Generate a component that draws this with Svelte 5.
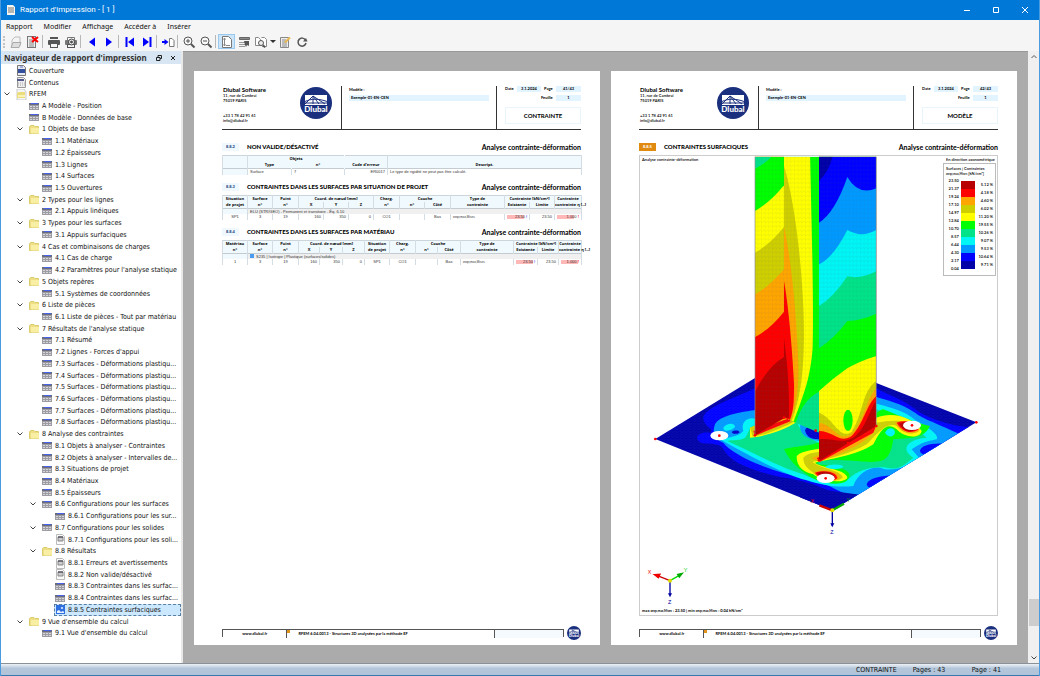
<script>
    const menus = ["Rapport", "Modifier", "Affichage", "Accéder à", "Insérer"];

    // "|" is a separator
    const tools = ["new", "delete", "|", "print", "printset", "|", "prev", "next", "|", "first", "last", "|",
        "goto", "|", "zoomin", "zoomout", "|", "fit", "header", "find", "caret", "edit", "refresh"];
    const toolNames = {
        new: "Nouveau", delete: "Supprimer", print: "Imprimer", printset: "Options d'impression", prev: "Précédent",
        next: "Suivant", first: "Première page", last: "Dernière page", goto: "Aller à", zoomin: "Zoom avant",
        zoomout: "Zoom arrière", fit: "Ajuster", header: "En-tête", find: "Rechercher", caret: "Plus",
        edit: "Éditer", refresh: "Actualiser",
    };

    // depth, icon, label, expandable
    const tree = [
        [0, "cover", "Couverture"],
        [0, "toc", "Contenus"],
        [0, "root", "RFEM", true],
        [1, "table", "A Modèle - Position"],
        [1, "table", "B Modèle - Données de base"],
        [1, "folder", "1 Objets de base", true],
        [2, "table", "1.1 Matériaux"],
        [2, "table", "1.2 Épaisseurs"],
        [2, "table", "1.3 Lignes"],
        [2, "table", "1.4 Surfaces"],
        [2, "table", "1.5 Ouvertures"],
        [1, "folder", "2 Types pour les lignes", true],
        [2, "table", "2.1 Appuis linéiques"],
        [1, "folder", "3 Types pour les surfaces", true],
        [2, "table", "3.1 Appuis surfaciques"],
        [1, "folder", "4 Cas et combinaisons de charges", true],
        [2, "table", "4.1 Cas de charge"],
        [2, "table", "4.2 Paramètres pour l'analyse statique"],
        [1, "folder", "5 Objets repères", true],
        [2, "table", "5.1 Systèmes de coordonnées"],
        [1, "folder", "6 Liste de pièces", true],
        [2, "table", "6.1 Liste de pièces - Tout par matériau"],
        [1, "folder", "7 Résultats de l'analyse statique", true],
        [2, "table", "7.1 Résumé"],
        [2, "table", "7.2 Lignes - Forces d'appui"],
        [2, "table", "7.3 Surfaces - Déformations plastiqu..."],
        [2, "table", "7.4 Surfaces - Déformations plastiqu..."],
        [2, "table", "7.5 Surfaces - Déformations plastiqu..."],
        [2, "table", "7.6 Surfaces - Déformations plastiqu..."],
        [2, "table", "7.7 Surfaces - Déformations plastiqu..."],
        [2, "table", "7.8 Surfaces - Déformations plastiqu..."],
        [1, "folder", "8 Analyse des contraintes", true],
        [2, "table", "8.1 Objets à analyser - Contraintes"],
        [2, "table", "8.2 Objets à analyser - Intervalles de..."],
        [2, "table", "8.3 Situations de projet"],
        [2, "table", "8.4 Matériaux"],
        [2, "table", "8.5 Épaisseurs"],
        [2, "table", "8.6 Configurations pour les surfaces", true],
        [3, "table", "8.6.1 Configurations pour les sur..."],
        [2, "table", "8.7 Configurations pour les solides", true],
        [3, "note", "8.7.1 Configurations pour les soli..."],
        [2, "folder", "8.8 Résultats", true],
        [3, "note", "8.8.1 Erreurs et avertissements"],
        [3, "note", "8.8.2 Non valide/désactivé"],
        [3, "table", "8.8.3 Contraintes dans les surfac..."],
        [3, "table", "8.8.4 Contraintes dans les surfac..."],
        [3, "image", "8.8.5 Contraintes surfaciques"],
        [1, "folder", "9 Vue d'ensemble du calcul", true],
        [2, "table", "9.1 Vue d'ensemble du calcul"],
    ];
    let selected = $state("8.8.5 Contraintes surfaciques");

    const cols1 = [25, 44, 53, 43, 194];
    const cols2 = [25, 25, 26, 25, 25, 25, 26, 25, 26, 54, 25, 25, 27];
    const cols3 = [25, 25, 26, 21, 23, 22, 25, 26, 22, 23, 53, 24, 21, 23];

    const levels = ["23.50", "21.37", "19.24", "17.10", "14.97", "12.84", "10.70", "8.57", "6.44", "4.30", "2.17", "0.04"];
    const bands = [
        ["#b80000", "5.12 %"], ["#ff0000", "4.18 %"], ["#ffa500", "4.60 %"], ["#cfcf00", "6.02 %"],
        ["#ffff00", "11.20 %"], ["#00ff00", "19.55 %"], ["#00e388", "10.26 %"], ["#00f5f5", "9.07 %"],
        ["#0099ff", "9.53 %"], ["#0000ff", "10.64 %"], ["#0000a8", "9.71 %"],
    ];
</script>

{#snippet toolIcon(name)}
    <svg viewBox="0 0 14 14" width="14" height="14" fill="none" stroke="#555" aria-hidden="true">
        {#if name == "new"}
            <path d="M3 12V5l3-3h5v9" fill="#f4f4f4" stroke="#bbb" />
            <path d="M2 12.5l2-5h8l-2 5z" fill="#ddd" stroke="#aaa" />
        {:else if name == "delete"}
            <rect x="1.5" y="1.5" width="8" height="11" fill="#eee" stroke="#777" />
            <path d="M3 5h4M3 7h5M3 9h5M3 11h5" stroke="#888" />
            <path d="M6 2l6 5M12 2L6 7" stroke="#f00" stroke-width="2" />
        {:else if name == "print"}
            <rect x="3" y="2" width="8" height="2" fill="#555" stroke="none" />
            <rect x="1" y="5" width="12" height="5" rx="1" fill="#555" stroke="none" />
            <rect x="3.5" y="8.5" width="7" height="4" fill="#f4f4f4" />
        {:else if name == "printset"}
            <path d="M3.5 5V2.500h7V5" fill="#fff" stroke="#777" />
            <rect x="1" y="5" width="12" height="5" rx="1" fill="#777" stroke="none" />
            <rect x="3.5" y="9.5" width="7" height="3" fill="#f4f4f4" />
            <circle cx="7.5" cy="7" r="3" fill="#eee" stroke="#444" />
            <circle cx="7.5" cy="7" r="1" fill="#444" />
        {:else if name == "prev"}
            <path d="M10 2.5v9L4 7z" fill="#00f" stroke="none" />
        {:else if name == "next"}
            <path d="M4 2.5v9L10 7z" fill="#00f" stroke="none" />
        {:else if name == "first"}
            <path d="M11 2.5v9L5 7z" fill="#00f" stroke="none" />
            <path d="M3.5 2v10" stroke="#00f" stroke-width="2" />
        {:else if name == "last"}
            <path d="M3 2.5v9L9 7z" fill="#00f" stroke="none" />
            <path d="M10.5 2v10" stroke="#00f" stroke-width="2" />
        {:else if name == "goto"}
            <path d="M1 7h3" stroke="#00f" stroke-width="2" />
            <path d="M3.500 4v6L7.5 7z" fill="#00f" stroke="none" />
            <path d="M8.5 3.5H11l2 2v6H8.500z" fill="#fff" stroke="#777" />
        {:else if name == "zoomin" || name == "zoomout"}
            <circle cx="6" cy="6" r="4" fill="#f8f8f8" />
            <path d="M4 6h4" />
            {#if name == "zoomin"}<path d="M6 4v4" />{/if}
            <path d="M9 9l3.5 3.5" stroke-width="2" />
        {:else if name == "fit"}
            <path d="M2.5 1.5h6l3 3v8h-9z" fill="#fff" stroke="#777" />
            <path d="M4.5 3v8M3.5 4.5l1-1.5 1 1.5M3.5 9.5l1 1.500 1-1.500M6 10.5h4" stroke="#888" />
        {:else if name == "header"}
            <path d="M2.500 2.5h10v2h-10z" fill="#888" stroke="#666" />
            <path d="M2 7.5h7M2 9.5h6M2 11.5h6" stroke="#999" />
            <path d="M7 6h5v5l-2-1-1 2-1-2z" fill="#555" stroke="none" />
        {:else if name == "find"}
            <path d="M1.5 2.5h3l2 2v6h-5zM7.500 2.5h3l2 2v7H8" fill="#fff" stroke="#888" />
            <circle cx="7" cy="8" r="2.5" fill="#eee" />
            <path d="M9 10l2 2.5" stroke-width="2" />
        {:else if name == "edit"}
            <path d="M2.500 2.500h8v10h-8z" fill="#eee" stroke="#888" />
            <path d="M4 5h4M4 7h5M4 9h5M4 11h5" stroke="#888" />
            <path d="M7 7.500L12 2.500" stroke="#e8b850" stroke-width="2" />
        {:else if name == "refresh"}
            <path d="M10.5 5A4 4 0 1 0 11 8" stroke-width="1.500" />
            <path d="M8 6.5h4.5L11 3z" fill="#555" stroke="none" />
        {/if}
    </svg>
{/snippet}

{#snippet treeIcon(name)}
    <svg viewBox="0 0 11 11" width="11" height="11" aria-hidden="true">
        {#if name == "table"}
            <path d="M0 2h10v7H0z" fill="#9c9ca2" />
            <path d="M0 2h10v2H0z" fill="#6a6c80" />
            <path d="M2 2h7v1H2z" fill="#4a62e8" />
            <path d="M1 5.5h8M1 7.5h8" stroke="#d6d6da" stroke-dasharray="2 1" />
        {:else if name == "folder"}
            <path d="M.5 2.5L2 1.500h3l1 1h3.5v7h-9z" fill="#ecdf86" stroke="#dccb6c" />
            <path d="M2 4h8v5.500H2z" fill="#f8eea4" />
        {:else if name == "root"}
            <path d="M1 0h7l2 3v8H1z" fill="#f5f5f5" stroke="#ccc" />
            <path d="M1 4l2-1h6v6H1z" fill="#ecdd7c" />
            <path d="M2 6h7v2H2z" fill="#fbf3b6" />
        {:else if name == "cover"}
            <path d="M1.5.5h6l2 2v8h-8z" fill="#e6e9f2" stroke="#777" />
            <path d="M2 4h7v4H2z" fill="#33509c" />
            <path d="M4 2h3" stroke="#6680cc" />
        {:else if name == "toc"}
            <path d="M1.5.5h6l2 2v8h-8z" fill="#eee" stroke="#999" />
            <path d="M1 2h7v2H1z" fill="#555a8c" />
            <path d="M2 6h7M2 8h7" stroke="#aaa" stroke-dasharray="1 1" />
        {:else if name == "note"}
            <path d="M1.5.5h6l2 2v8h-8z" fill="#fafafa" stroke="#bbb" />
            <path d="M3 3h5v4H3z" fill="#ccc" stroke="#888" />
            <path d="M3 3h5" stroke="#334" />
        {:else}
            <path d="M1 1h9v9H1z" fill="#2f6fe0" />
            <path d="M2 9V7l2-1 2 2 2-1 1 1v1z" fill="#e8f1ff" />
            <path d="M6 3h2v2H6z" fill="#bcd4ff" />
        {/if}
    </svg>
{/snippet}

{#snippet logo(size)}
    <svg class="logo" viewBox="0 0 32 32" width={size} height={size} role="img" aria-label="Dlubal">
        <circle cx="16" cy="16" r="16" fill="#1a2f7d" />
        <path d="M5 8h22v10H5z" fill="#fff" />
        <path d="M5 17L13 9l12 8M13 9v8M13 9l6 8M5 14.5c6-3 14-3 22 0" stroke="#1a2f7d" fill="none" />
        <path d="M5 16h22" stroke="#1a2f7d" />
        <text x="16" y="25" text-anchor="middle" class="logo-text">Dlubal</text>
    </svg>
{/snippet}

{#snippet pageHeader(title, page)}
    <header class="rep-head">
        <div class="company">
            <address>
                <b>Dlubal Software</b>
                <span>11, rue de Cambrai</span>
                <span>75019 PARIS</span>
                <span class="phone">+33 1 78 42 91 61</span>
                <span>info@dlubal.fr</span>
            </address>
            {@render logo(32)}
        </div>
        <div class="model">
            <span>Modèle :</span>
            <span class="field">Exemple-01-EN-CEN</span>
        </div>
        <div class="meta">
            <div class="meta-grid">
                <span>Date</span><span class="field">3.1.2024</span><span>Page</span><span class="field">{page}</span>
                <span class="sheet">Feuille</span><span class="field">1</span>
            </div>
            <div class="box">{title}</div>
        </div>
    </header>
{/snippet}

{#snippet heading(num, title, hot)}
    <div class="rep-title">
        <span class="num" class:hot>{num}</span>
        <h2>{title}</h2>
        <span class="module">Analyse contrainte-déformation</span>
    </div>
{/snippet}

{#snippet pageFooter()}
    <footer class="rep-foot">
        <div class="foot-box">
            <span class="site">www.dlubal.fr</span>
            <span class="prog"><i></i>RFEM 6.04.0013 - Structures 3D analysées par la méthode EF</span>
            <span class="blank"></span>
        </div>
        {@render logo(14)}
    </footer>
{/snippet}

{#snippet colgroup(widths)}
    <colgroup>
        {#each widths as w}<col style="width: {w}px" />{/each}
    </colgroup>
{/snippet}

<div class="window">
    <div class="titlebar">
        <svg viewBox="0 0 10 12" width="10" height="12" aria-hidden="true">
            <path d="M1 1h6l2 2v8H1z" fill="#f4f4f0" />
            <path d="M2 4h6M2 6h6M2 8h6" stroke="#777" />
        </svg>
        <span class="caption">Rapport d'impression - [ 1 ]</span>
        <button aria-label="Réduire"><svg viewBox="0 0 8 8" width="8" height="8"><path d="M1 4.5h6" stroke="#fff" /></svg></button>
        <button aria-label="Agrandir"><svg viewBox="0 0 8 8" width="8" height="8"><path d="M1.5 1.5h5v5h-5z" fill="none" stroke="#fff" /></svg></button>
        <button aria-label="Fermer"><svg viewBox="0 0 8 8" width="8" height="8"><path d="M1 1l6 6M7 1L1 7" stroke="#fff" /></svg></button>
    </div>

    <nav class="menubar">
        {#each menus as menu}<button>{menu}</button>{/each}
    </nav>

    <div class="toolbar">
        <span class="grip"></span>
        {#each tools as tool}
            {#if tool == "|"}
                <span class="sep"></span>
            {:else if tool == "caret"}
                <button class="caret" aria-label={toolNames[tool]}></button>
            {:else}
                <button class="tool" class:on={tool == "fit"} aria-label={toolNames[tool]}>{@render toolIcon(tool)}</button>
            {/if}
        {/each}
    </div>

    <main>
        <aside>
            <div class="nav-head">
                <b>Navigateur de rapport d'impression</b>
                <button aria-label="Détacher"><svg viewBox="0 0 8 8" width="8" height="8" fill="none" stroke="#222"><path d="M3 3V1.5h3.5v3H5M1.5 3.500H5v3H1.5z" /></svg></button>
                <button aria-label="Fermer le navigateur"><svg viewBox="0 0 8 8" width="8" height="8" stroke="#222"><path d="M2 2l4 4M6 2L2 6" /></svg></button>
            </div>
            <ul>
                {#each tree as [depth, icon, label, open]}
                    <li class="d{depth}">
                        <span class="chev">
                            {#if open}<svg viewBox="0 0 8 6" width="8" height="6"><path d="M1.5 1.5L4 4l2.5-2.5" fill="none" stroke="#444" /></svg>{/if}
                        </span>
                        <button class:selected={label == selected} onclick={() => (selected = label)}>
                            {@render treeIcon(icon)}
                            <span>{label}</span>
                        </button>
                    </li>
                {/each}
            </ul>
        </aside>

        <div class="pages">
            <article>
                {@render pageHeader("CONTRAINTE", "41/43")}

                {@render heading("8.8.2", "NON VALIDE/DÉSACTIVÉ")}
                <table>
                    {@render colgroup(cols1)}
                    <thead>
                        <tr><th></th><th colspan="2" class="joined">Objets</th><th></th><th></th></tr>
                        <tr><th></th><th class="joined">Type</th><th class="joined">n°</th><th>Code d'erreur</th><th>Descript.</th></tr>
                    </thead>
                    <tbody>
                        <tr><td class="tint"></td><td class="l">Surface</td><td class="l">7</td><td class="r">ER0017</td><td class="l">Le type de rigidité ne peut pas être calculé.</td></tr>
                    </tbody>
                </table>

                {@render heading("8.8.3", "CONTRAINTES DANS LES SURFACES PAR SITUATION DE PROJET")}
                <table>
                    {@render colgroup(cols2)}
                    <thead>
                        <tr>
                            <th>Situation</th><th>Surface</th><th>Point</th><th colspan="3">Coord. de nœud [mm]</th><th>Charg.</th>
                            <th colspan="2">Couche</th><th>Type de</th><th colspan="2">Contrainte [kN/cm²]</th><th>Contrainte</th>
                        </tr>
                        <tr>
                            <th>de projet</th><th>n°</th><th>n°</th><th>X</th><th>Y</th><th>Z</th><th>n°</th>
                            <th>n°</th><th>Côté</th><th>contrainte</th><th>Existante</th><th>Limite</th><th>contrainte η [--]</th>
                        </tr>
                    </thead>
                    <tbody>
                        <tr class="group"><td class="tint"></td><td colspan="12">ELU (STR/GEO) - Permanent et transitoire - Éq. 6.10</td></tr>
                        <tr>
                            <td>SP1</td><td>3</td><td>19</td><td class="r">160</td><td class="r">350</td><td class="r">0</td><td>CO1</td>
                            <td></td><td>Bas</td><td class="l tiny">σeqv,max,Mises</td><td class="r bar">23.50 <b class="blue">⁝</b></td>
                            <td class="r">23.50</td><td class="r bar">1.000 <b class="red">!</b></td>
                        </tr>
                    </tbody>
                </table>

                {@render heading("8.8.4", "CONTRAINTES DANS LES SURFACES PAR MATÉRIAU")}
                <table>
                    {@render colgroup(cols3)}
                    <thead>
                        <tr>
                            <th>Matériau</th><th>Surface</th><th>Point</th><th colspan="3">Coord. de nœud [mm]</th><th>Situation</th>
                            <th>Charg.</th><th colspan="2">Couche</th><th>Type de</th><th colspan="2">Contrainte [kN/cm²]</th><th>Contrainte</th>
                        </tr>
                        <tr>
                            <th>n°</th><th>n°</th><th>n°</th><th>X</th><th>Y</th><th>Z</th><th>de projet</th>
                            <th>n°</th><th>n°</th><th>Côté</th><th>contrainte</th><th>Existante</th><th>Limite</th><th>contrainte η [--]</th>
                        </tr>
                    </thead>
                    <tbody>
                        <tr class="group"><td class="tint"></td><td colspan="13"><i class="mat"></i>S235 | Isotrope | Plastique (surfaces/solides)</td></tr>
                        <tr>
                            <td>1</td><td>3</td><td>19</td><td class="r">160</td><td class="r">350</td><td class="r">0</td><td>SP1</td>
                            <td>CO1</td><td></td><td>Bas</td><td class="l tiny">σeqv,max,Mises</td><td class="r bar">23.50 <b class="blue">⁝</b></td>
                            <td class="r">23.50</td><td class="r bar">1.000 <b class="red">!</b></td>
                        </tr>
                    </tbody>
                </table>

                {@render pageFooter()}
            </article>

            <article>
                {@render pageHeader("MODÈLE", "42/43")}
                {@render heading("8.8.5", "CONTRAINTES SURFACIQUES", true)}

                <figure>
                    <figcaption><span>Analyse contrainte-déformation</span><span>En direction axonométrique</span></figcaption>
                    <svg class="plot" viewBox="0 15 1071 1377" role="img" aria-label="Contraintes surfaciques">
                        <defs>
                            <clipPath id="plate"><path d="M46 864L472 603L1009 814L577 1078z" /></clipPath>
                            <clipPath id="left"><path d="M345 17H432V802L345 853z" /></clipPath>
                            <clipPath id="web"><path d="M432 17H537V845L467 815L445 805L432 800z" /></clipPath>
                            <clipPath id="right"><path d="M537 17H709V825L537 930z" /></clipPath>
                            <pattern id="mesh" width="11" height="13" patternUnits="userSpaceOnUse">
                                <path d="M0 0V13M0 7L11 3" stroke="#456" stroke-opacity=".25" fill="none" />
                            </pattern>
                            <pattern id="grid" width="13" height="8" patternUnits="userSpaceOnUse">
                                <path d="M0 0L13 5M0 8L13 0" stroke="#9cf" stroke-opacity=".15" fill="none" />
                            </pattern>
                        </defs>

                        <!-- base plate -->
                        <g clip-path="url(#plate)">
                            <g transform="translate(0 660)">
                                <path d="M0-80H1077V440H0z" fill="#0000a8" />
                                <path d="M360 45C290 80 185 110 190 145C195 170 225 175 210 185C170 180 160 205 185 216C220 222 240 215 250 235C270 275 340 300 420 318C500 330 540 345 577 365L650 400L1077 240L985 168C930 165 860 140 830 118C790 85 750 75 709 52L600 0z" fill="#00f" />
                                <path d="M360 115C290 125 240 135 225 160C215 185 225 205 250 215C280 255 400 305 500 322C560 335 590 360 640 380L1077 200L960 190C900 160 850 145 825 125C780 95 745 90 700 75L500 40z" fill="#09f" />
                                <path d="M360 150C330 130 300 150 310 180C290 200 270 195 245 208C330 255 430 310 500 328C550 345 600 350 640 345C650 310 690 285 720 290C770 310 830 270 850 262C800 240 830 215 890 205C900 190 850 160 830 150C790 115 750 110 700 95L460 90z" fill="#00f5f5" />
                                <path d="M360 165C325 155 330 185 315 200C300 210 280 205 262 210C340 245 420 290 490 310C530 330 600 345 625 325C650 300 690 285 740 290C780 300 800 275 820 260C780 235 800 205 860 200C830 170 790 150 700 110L500 130z" fill="#00e388" />
                                <path d="M432 235C450 225 530 228 560 200C650 240 690 120 730 115C780 135 840 160 870 165C850 210 790 200 760 205C750 270 730 275 680 272C600 268 540 260 530 280C600 285 650 300 620 330C590 350 520 330 500 310C470 290 450 270 432 235z" fill="#0f0" />
                                <path d="M330 200C360 200 430 180 475 150L430 130L330 170zM470 255C490 235 530 240 560 225L709 140C760 120 820 140 845 180C840 205 790 200 770 175C740 150 720 180 700 220C650 255 560 265 525 275C540 290 620 295 622 320C610 340 540 330 520 310C480 300 470 280 470 255z" fill="#ff0" />
                                <path d="M338 197C370 195 430 170 465 150L430 130L330 170zM490 260C510 240 530 250 560 235L709 155C760 145 820 145 838 178C825 195 790 190 770 165C740 150 710 190 680 220C630 250 560 265 518 272C530 290 610 298 608 320C590 335 540 330 520 305C500 290 490 280 490 260z" fill="#cfcf00" />
                                <path d="M342 195L455 152L430 130L340 180zM515 262L709 168C700 200 640 235 540 272zM765 155C790 145 840 150 838 178C820 195 780 185 765 155zM520 305C550 292 600 300 600 320C590 335 545 330 520 305z" fill="#ffa500" />
                                <path d="M345 194L452 150V140L340 180zM530 262L709 163L700 185L540 272zM770 155C800 145 835 155 835 175C815 192 785 182 770 155zM525 305C560 295 592 305 592 322C575 335 540 328 525 305z" fill="#f00" />
                                <path d="M778 158C800 148 830 158 828 175C810 188 790 178 778 158zM532 305C560 298 585 306 584 322C570 332 545 325 532 305z" fill="#b80000" />
                                <path d="M470 150C490 110 520 90 537 110V215C500 200 480 180 470 150zM250 170C260 155 285 155 285 168C275 180 250 185 250 170z" fill="#00f5f5" />
                                <path d="M480 165C500 120 537 130 537 130V210C500 205 480 190 480 165zM250 185C270 175 310 175 300 188C280 195 255 195 250 185z" fill="#09f" />
                                <path d="M495 178C505 155 537 160 537 160V205C510 205 498 195 495 178zM275 183C285 176 300 178 298 185C290 190 278 190 275 183z" fill="#00c" />
                                <path d="M555 287C570 278 605 278 610 287C605 296 565 296 555 287zM735 185C745 165 765 170 765 185C760 200 745 200 735 185z" fill="#00f5f5" />
                                <path d="M815 235C850 205 910 215 940 215L850 275z" fill="#09f" />
                                <path d="M840 238C850 215 900 218 930 218L862 252C850 252 840 248 840 238z" fill="#00f" />
                                <path d="M660 340C690 300 740 305 785 295L660 372z" fill="#09f" />
                                <path d="M680 340C690 315 740 315 760 312L710 350C690 352 682 350 680 340z" fill="#00f" />
                                <path d="M577 360L665 372L577 440L480 380L500 345z" fill="#0000a8" />
                            </g>
                            <path d="M0 600H1077V1100H0z" fill="url(#grid)" />
                        </g>
                        {#each [[238, 854], [816, 823], [557, 982]] as [x, y]}
                            <ellipse cx={x} cy={y} rx="27" ry="14" fill="#fff" />
                            <circle cx={x} cy={y} r="4" fill="#f00" />
                        {/each}

                        <!-- left flange -->
                        <g clip-path="url(#left)">
                            <path d="M345 0H432V900H345z" fill="#b80000" />
                            <path d="M345 0H432V618Q385 645 345 722z" fill="#f00" />
                            <path d="M345 0H432V482Q390 535 345 558z" fill="#ffa500" />
                            <path d="M345 0H432V355Q390 405 345 430z" fill="#cfcf00" />
                            <path d="M345 0H432V228Q390 280 345 305z" fill="#ff0" />
                            <path d="M345 0H432V103Q390 155 345 180z" fill="#0f0" />
                            <path d="M345 0H412Q375 40 345 53z" fill="#00e388" />
                        </g>
                        <!-- web -->
                        <g clip-path="url(#web)">
                            <path d="M432 0H537V860H432z" fill="#00e388" />
                            <path d="M432 0H537V722Q490 745 467 815H432z" fill="#0f0" />
                            <path d="M432 0H510C514 200 522 450 518 590C510 690 490 730 460 815H432z" fill="#ff0" />
                            <path d="M432 45C465 150 492 380 492 560C490 680 480 740 455 810H432z" fill="#cfcf00" />
                            <path d="M432 228C455 330 470 500 475 640C477 720 468 760 452 808H432z" fill="#ffa500" />
                            <path d="M432 390C448 480 458 620 462 700C462 760 460 780 450 806H432z" fill="#f00" />
                            <path d="M432 560C442 640 448 700 447 800H432z" fill="#b80000" />
                        </g>
                        <!-- right flange -->
                        <g clip-path="url(#right)">
                            <path d="M537 0H709V940H537z" fill="#b80000" />
                            <path d="M537 0H709V750C690 770 680 830 640 860C600 880 580 860 537 865z" fill="#f00" />
                            <path d="M537 0H709V735C680 760 670 820 635 855C600 880 580 840 537 840z" fill="#ffa500" />
                            <path d="M537 0H709V710C675 750 670 820 632 850C595 875 580 820 537 815z" fill="#cfcf00" />
                            <path d="M537 0H709V690C665 720 670 790 635 842C600 870 580 800 537 785z" fill="#ff0" />
                            <path d="M537 0H709V615Q660 630 622 652Q575 685 537 720z" fill="#0f0" />
                            <path d="M537 0H709V488Q665 508 622 510Q580 565 537 592z" fill="#00e388" />
                            <path d="M537 0H709V360Q665 385 622 376Q580 440 537 465z" fill="#00f5f5" />
                            <path d="M537 0H709V237Q665 262 622 237Q580 320 537 340z" fill="#09f" />
                            <path d="M537 0H709V112Q655 135 622 78Q585 185 537 215z" fill="#00f" />
                            <path d="M537 0H582Q570 60 537 90z" fill="#0000a8" />
                            <ellipse cx="624" cy="808" rx="14" ry="32" fill="#0f0" />
                        </g>
                        <path d="M345 17H709V825L537 930V840L467 815L345 853z" fill="url(#mesh)" />
                        <path d="M345 17V853M709 17V825" stroke="#889" stroke-width="2" />

                        {#each [[46, 864], [1009, 814], [345, 853], [432, 800], [537, 928], [709, 825], [624, 876], [527, 839]] as [x, y]}
                            <circle cx={x} cy={y} r="4" fill="#f00" />
                        {/each}

                        <!-- axes -->
                        <g fill="none" stroke-width="4">
                            <path d="M577 1078L538 1063" stroke="#c00" stroke-width="7" />
                            <path d="M577 1078L612 1058" stroke="#0a0" stroke-width="7" />
                            <path d="M577 1078V1125" stroke="#0000a0" />
                            <path d="M571 1117h12l-6 12z" fill="#0000a0" stroke="none" />
                            <circle cx="577" cy="1078" r="6" fill="#dd0" stroke="none" />

                            <path d="M90 1289L50 1273" stroke="#c00" />
                            <path d="M43 1271l17-1-5 10z" fill="#e00" stroke="#e00" />
                            <path d="M90 1289L122 1271" stroke="#0d0" />
                            <path d="M127 1267l-14 3 5 8z" fill="#0a0" stroke="#0a0" />
                            <path d="M90 1289V1330" stroke="#0000a0" />
                            <path d="M84 1327h12l-6 12z" fill="#0000a0" stroke="none" />
                            <circle cx="90" cy="1289" r="6" fill="#dd0" stroke="none" />
                        </g>
                        <g class="axis">
                            <text x="571" y="1148" fill="#0000a0">Z</text>
                            <text x="512" y="1056" fill="#e00">X</text>
                            <text x="620" y="1052" fill="#0a0">Y</text>
                            <text x="23" y="1270" fill="#e00">X</text>
                            <text x="131" y="1263" fill="#0c0">Y</text>
                            <text x="84" y="1358" fill="#0000a0">Z</text>
                        </g>
                    </svg>

                    <div class="legend">
                        <div>Surfaces | Contraintes</div>
                        <div><small>σeqv,max,Mises</small> [kN/cm²]</div>
                        <div class="scale">
                            <div class="levels">{#each levels as level}<span>{level}</span>{/each}</div>
                            <div class="swatches">{#each bands as [color]}<i style="background: {color}"></i>{/each}</div>
                            <div class="shares">{#each bands as [, share]}<span>{share}</span>{/each}</div>
                        </div>
                    </div>
                    <p class="minmax">max <small>σeqv,max,Mises</small> : 23.50 | min <small>σeqv,max,Mises</small> : 0.04 kN/cm²</p>
                </figure>

                {@render pageFooter()}
            </article>
        </div>

        <div class="scrollbar">
            <svg viewBox="0 0 8 6" width="8" height="6"><path d="M1.5 4L4 1.5L6.5 4" fill="none" stroke="#555" /></svg>
            <i></i>
            <svg viewBox="0 0 8 6" width="8" height="6"><path d="M1.5 1.5L4 4l2.5-2.5" fill="none" stroke="#444" /></svg>
        </div>
    </main>

    <div class="statusbar">
        <span>CONTRAINTE</span>
        <span class="count">Pages : 43</span>
        <span>Page : 41</span>
    </div>
</div>

<style>
    :global(body) {
        margin: 0;
    }
    * {
        box-sizing: border-box;
    }
    button {
        display: flex;
        align-items: center;
        justify-content: center;
        padding: 0;
        border: 0;
        background: none;
        color: inherit;
        font: inherit;
    }
    svg {
        display: block;
        flex: none;
    }
    .window {
        display: flex;
        flex-direction: column;
        height: 100vh;
        border: solid #4a9be0;
        border-width: 0 1px;
        background: #f5f5f5;
        color: #111;
        font: 7px/12px "DejaVu Sans Condensed", "DejaVu Sans", sans-serif;
    }

    .titlebar {
        display: flex;
        align-items: center;
        flex: none;
        height: 20px;
        padding-left: 5px;
        background: #0078d7;
        color: #fff;
        font: 8px/20px Roboto, sans-serif;
    }
    .caption {
        flex: 1;
        padding-left: 4px;
    }
    .titlebar button {
        width: 29px;
        height: 20px;
    }
    .menubar {
        display: flex;
        flex: none;
        gap: 11px;
        height: 14px;
        padding-left: 5px;
        font: 7px/14px "Noto Sans", sans-serif;
    }
    .toolbar {
        display: flex;
        align-items: center;
        flex: none;
        height: 17px;
        padding: 0 0 2px 2px;
    }
    .grip {
        width: 4px;
        height: 12px;
        border-left: 2px dotted #c4c4c4;
    }
    .sep {
        width: 1px;
        height: 13px;
        margin: 0 2px 0 1px;
        background: #b8b8b8;
    }
    .tool {
        width: 17px;
        height: 15px;
    }
    .tool.on {
        background: #cce4f7;
        box-shadow: inset 0 0 0 1px #99c9ef;
    }
    .caret {
        width: 7px;
    }
    .caret::after {
        content: "";
        border: 3px solid transparent;
        border-top-color: #333;
        border-bottom: 0;
    }

    main {
        display: flex;
        flex: 1;
        min-height: 0;
    }
    aside {
        display: flex;
        flex-direction: column;
        width: 182px;
        flex: none;
        border-right: 2px solid #e8e8e8;
        background: #fff;
    }
    .nav-head {
        display: flex;
        align-items: center;
        flex: none;
        gap: 6px;
        height: 13px;
        padding: 0 4px 0 3px;
        background: #d8e5f2;
        color: #333;
        font: 8px/13px "Noto Sans", sans-serif;
    }
    .nav-head b {
        flex: 1;
        white-space: nowrap;
    }
    ul {
        display: flex;
        flex-direction: column;
        flex: 1;
        min-height: 0;
        margin: 0;
        padding: 1px 0 24px;
        list-style: none;
    }
    li {
        display: flex;
        align-items: center;
        flex: 1;
        min-height: 0;
        padding-left: 2px;
    }
    .d1 {
        padding-left: 15px;
    }
    .d2 {
        padding-left: 28px;
    }
    .d3 {
        padding-left: 41px;
    }
    .chev {
        width: 8px;
        flex: none;
        margin-right: 4px;
    }
    li button {
        justify-content: start;
        gap: 2px;
        height: 12px;
        padding-left: 1px;
        white-space: nowrap;
    }
    li .selected {
        flex: 1;
        background: #cce8ff;
        outline: 1px dashed #5a7fa5;
        outline-offset: -1px;
    }

    .pages {
        display: flex;
        flex: 1;
        gap: 11px;
        padding: 19px 11px 18px;
        border-top: 1px solid #999;
        background: #ababab;
    }
    article {
        display: flex;
        flex-direction: column;
        flex: 1;
        min-width: 0;
        padding: 15px 19px 5px 28px;
        background: #fff;
        color: #000;
        font: 5px/6px Lato, sans-serif;
    }
    .rep-head {
        display: grid;
        grid-template-columns: 119fr 156fr 84fr;
        height: 44px;
        border-bottom: 1px solid #333;
    }
    .company {
        display: flex;
        justify-content: space-between;
        padding-right: 9px;
    }
    address {
        display: flex;
        flex-direction: column;
        padding-left: 1px;
        font: 600 4px/5px Lato, sans-serif;
    }
    address b {
        font: 700 6px/7px Lato, sans-serif;
    }
    .phone {
        margin-top: 10px;
    }
    .logo {
        margin-top: 1px;
    }
    .logo-text {
        fill: #fff;
        font: 900 8px Lato, sans-serif;
    }
    .model {
        display: flex;
        flex-direction: column;
        gap: 2px;
        padding: 1px 7px 0;
        border: solid #333;
        border-width: 0 1px;
        font: 700 4px/6px Lato, sans-serif;
    }
    .field {
        background: #e2f4ff;
    }
    .model .field {
        padding-left: 2px;
    }
    .meta {
        padding-left: 8px;
    }
    .meta-grid {
        display: grid;
        grid-template-columns: 12fr 24fr 15fr 25fr;
        gap: 3px 0;
        font: 700 4px/6px Lato, sans-serif;
    }
    .meta-grid .field {
        text-align: center;
    }
    .meta-grid span:nth-child(3) {
        padding-left: 3px;
    }
    .sheet {
        grid-column: 3;
    }
    .box {
        margin-top: 6px;
        border: 1px solid #e8f5fd;
        font: 700 6px/15px Lato, sans-serif;
        text-align: center;
    }

    .rep-title {
        display: flex;
        align-items: center;
        margin-top: 8px;
        padding-bottom: 4px;
        font: 900 6px/8px Lato, sans-serif;
    }
    .rep-head + .rep-title {
        margin-top: 13px;
    }
    .num {
        width: 17px;
        margin-right: 8px;
        background: #eff7ff;
        color: #24427c;
        font-size: 4px;
        text-align: center;
    }
    .num.hot {
        background: #e08a10;
        color: #fff;
    }
    h2 {
        flex: 1;
        margin: 0;
        font: inherit;
    }
    .module {
        font-size: 7px;
        font-weight: 700;
    }
    table {
        width: 100%;
        table-layout: fixed;
        border-collapse: collapse;
        border-top: 1px solid #ccd5dc;
        line-height: 6px;
        white-space: nowrap;
    }
    th,
    td {
        padding: 0;
        border: solid #d4dde4;
        border-width: 0 1px;
        text-align: center;
    }
    th {
        background: #f0f9fe;
        font: 700 4px/6px "Open Sans", sans-serif;
    }
    thead {
        border-bottom: 1px solid #c4ccd2;
    }
    td {
        color: #333;
        font: 4px/6px "Liberation Sans", sans-serif;
    }
    .joined {
        border-color: transparent;
    }
    .l {
        padding-left: 2px;
        text-align: left;
    }
    .r {
        padding-right: 2px;
        text-align: right;
    }
    .tiny {
        font-size: 3px;
    }
    .tint {
        background: #f0f9fe;
    }
    .group td {
        padding-left: 2px;
        text-align: left;
        line-height: 5px;
    }
    .group td + td {
        background: #f0f0f0;
    }
    .bar {
        background: linear-gradient(#ffb8b8, #ffb8b8) 2px 1px / 17px 4px no-repeat;
    }
    .blue {
        color: #22f;
    }
    .red {
        color: #e00;
    }
    .mat {
        display: inline-block;
        width: 4px;
        height: 4px;
        margin-right: 2px;
        background: #4a9bf0;
    }

    .rep-foot {
        display: flex;
        align-items: center;
        gap: 3px;
        margin-top: auto;
        font: 700 4px/8px Lato, sans-serif;
    }
    .rep-foot .logo {
        margin: 0;
    }
    .foot-box {
        display: grid;
        grid-template-columns: 64fr 209fr 70fr;
        flex: 1;
        height: 8px;
        border: solid #555;
        border-width: 1px 1px 0;
    }
    .site {
        text-align: center;
    }
    .prog {
        display: flex;
        gap: 8px;
        border-left: 1px solid #555;
    }
    .prog i {
        width: 3px;
        height: 3px;
        background: #e0921a;
    }
    .blank {
        border-left: 1px solid #555;
        background: #f4fafe;
    }

    figure {
        position: relative;
        margin: 0;
        border: 1px solid #ccc;
    }
    figcaption {
        position: absolute;
        inset: 1px 2px auto;
        display: flex;
        justify-content: space-between;
        font: 600 4px/6px Lato, sans-serif;
    }
    .plot {
        width: 100%;
    }
    .axis {
        font: 16px "Liberation Sans", sans-serif;
    }
    .legend {
        position: absolute;
        top: 7px;
        right: 1px;
        width: 53px;
        padding: 2px;
        border: 1px solid #bbb;
        background: #fff;
        font: 600 4px/5px Lato, sans-serif;
        white-space: nowrap;
    }
    small {
        font-size: 3px;
    }
    .scale {
        display: grid;
        grid-template-columns: 14fr 16fr 17fr;
        gap: 2px;
    }
    .levels,
    .shares {
        display: flex;
        flex-direction: column;
        line-height: 8px;
        text-align: right;
    }
    .shares {
        padding-top: 4px;
    }
    .swatches {
        display: flex;
        flex-direction: column;
        padding: 4px 0;
    }
    .swatches i {
        flex: 1;
    }
    .minmax {
        position: absolute;
        bottom: 1px;
        left: 2px;
        margin: 0;
        font: 700 4px/6px Lato, sans-serif;
    }

    .scrollbar {
        display: flex;
        flex-direction: column;
        align-items: center;
        width: 11px;
        padding: 3px 0 2px;
        background: #f0f0f0;
    }
    .scrollbar i {
        width: 10px;
        height: 27px;
        margin: auto 0 29px;
        background: #cdcdcd;
    }
    .statusbar {
        display: flex;
        justify-content: flex-end;
        flex: none;
        gap: 16px;
        height: 13px;
        padding-right: 38px;
        border-top: 1px solid #8a9098;
        border-bottom: 1px solid #3a78b0;
        background: linear-gradient(#eef2f6, #b4c6da 40%, #b0c3d8);
    }
    .count {
        min-width: 43px;
    }
</style>
